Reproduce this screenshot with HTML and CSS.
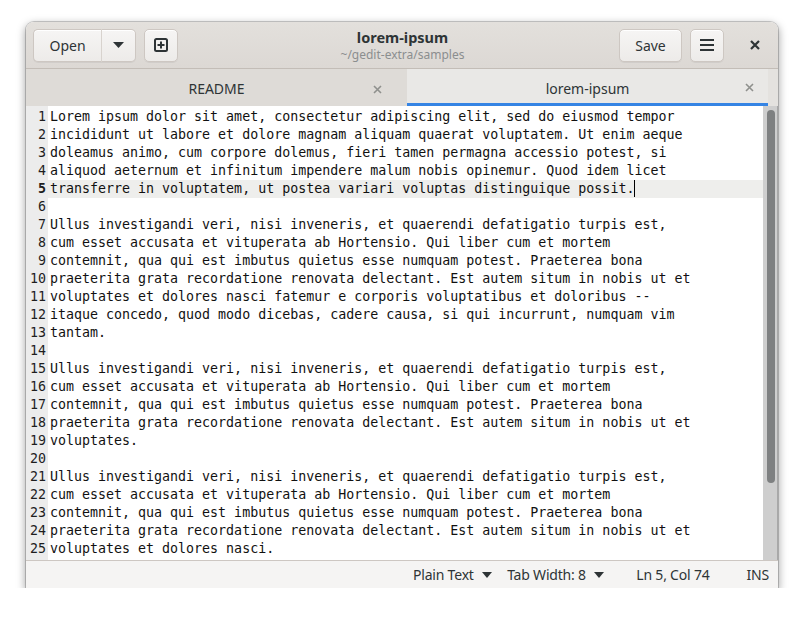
FILE: index.html
```html
<!DOCTYPE html>
<html>
<head>
<meta charset="utf-8">
<link rel="stylesheet" href="styles.css">
</head>
<body>
<div class="window">
  <header class="headerbar">
    <div class="hb-left">
      <div class="split">
        <button class="btn btn-open">Open</button>
        <button class="btn btn-drop"><svg width="11" height="6" viewBox="0 0 11 6"><path d="M0 0h11L5.5 6z" fill="#2e3436"/></svg></button>
      </div>
      <button class="btn btn-icon"><svg width="14" height="14" viewBox="0 0 14 14"><rect x="1" y="1" width="12" height="12" rx="1.5" fill="none" stroke="#2e3436" stroke-width="2"/><path d="M7 3.5v7M3.5 7h7" stroke="#2e3436" stroke-width="2"/></svg></button>
    </div>
    <div class="title">
      <div class="title-main">lorem-ipsum</div>
      <div class="title-sub">~/gedit-extra/samples</div>
    </div>
    <div class="hb-right">
      <button class="btn btn-save">Save</button>
      <button class="btn btn-icon"><svg width="16" height="14" viewBox="0 0 16 14"><path d="M1 2h14M1 7h14M1 12h14" stroke="#2e3436" stroke-width="2"/></svg></button>
      <button class="btn-close"><svg width="10" height="10" viewBox="0 0 10 10"><path d="M1 1l8 8M9 1l-8 8" stroke="#2e3436" stroke-width="2.2"/></svg></button>
    </div>
  </header>
  <nav class="tabbar">
    <div class="tab tab-readme"><span class="tab-label">README</span><span class="tab-x"><svg width="9" height="9" viewBox="0 0 9 9"><path d="M1 1l7 7M8 1l-7 7" stroke="#8f908d" stroke-width="1.6"/></svg></span></div>
    <div class="tab tab-active"><span class="tab-label">lorem-ipsum</span><span class="tab-x"><svg width="9" height="9" viewBox="0 0 9 9"><path d="M1 1l7 7M8 1l-7 7" stroke="#8f908d" stroke-width="1.6"/></svg></span></div>
    <div class="tab-rest"></div>
  </nav>
  <main class="editor">
    <div class="gutter">
      <div class="ln">1</div><div class="ln">2</div><div class="ln">3</div><div class="ln">4</div><div class="ln ln-cur">5</div>
      <div class="ln">6</div><div class="ln">7</div><div class="ln">8</div><div class="ln">9</div><div class="ln">10</div>
      <div class="ln">11</div><div class="ln">12</div><div class="ln">13</div><div class="ln">14</div><div class="ln">15</div>
      <div class="ln">16</div><div class="ln">17</div><div class="ln">18</div><div class="ln">19</div><div class="ln">20</div>
      <div class="ln">21</div><div class="ln">22</div><div class="ln">23</div><div class="ln">24</div><div class="ln">25</div>
    </div>
    <div class="text">
      <div class="line">Lorem ipsum dolor sit amet, consectetur adipiscing elit, sed do eiusmod tempor</div>
      <div class="line">incididunt ut labore et dolore magnam aliquam quaerat voluptatem. Ut enim aeque</div>
      <div class="line">doleamus animo, cum corpore dolemus, fieri tamen permagna accessio potest, si</div>
      <div class="line">aliquod aeternum et infinitum impendere malum nobis opinemur. Quod idem licet</div>
      <div class="line line-cur">transferre in voluptatem, ut postea variari voluptas distinguique possit.<span class="cursor"></span></div>
      <div class="line"></div>
      <div class="line">Ullus investigandi veri, nisi inveneris, et quaerendi defatigatio turpis est,</div>
      <div class="line">cum esset accusata et vituperata ab Hortensio. Qui liber cum et mortem</div>
      <div class="line">contemnit, qua qui est imbutus quietus esse numquam potest. Praeterea bona</div>
      <div class="line">praeterita grata recordatione renovata delectant. Est autem situm in nobis ut et</div>
      <div class="line">voluptates et dolores nasci fatemur e corporis voluptatibus et doloribus --</div>
      <div class="line">itaque concedo, quod modo dicebas, cadere causa, si qui incurrunt, numquam vim</div>
      <div class="line">tantam.</div>
      <div class="line"></div>
      <div class="line">Ullus investigandi veri, nisi inveneris, et quaerendi defatigatio turpis est,</div>
      <div class="line">cum esset accusata et vituperata ab Hortensio. Qui liber cum et mortem</div>
      <div class="line">contemnit, qua qui est imbutus quietus esse numquam potest. Praeterea bona</div>
      <div class="line">praeterita grata recordatione renovata delectant. Est autem situm in nobis ut et</div>
      <div class="line">voluptates.</div>
      <div class="line"></div>
      <div class="line">Ullus investigandi veri, nisi inveneris, et quaerendi defatigatio turpis est,</div>
      <div class="line">cum esset accusata et vituperata ab Hortensio. Qui liber cum et mortem</div>
      <div class="line">contemnit, qua qui est imbutus quietus esse numquam potest. Praeterea bona</div>
      <div class="line">praeterita grata recordatione renovata delectant. Est autem situm in nobis ut et</div>
      <div class="line">voluptates et dolores nasci.</div>
    </div>
    <div class="scrollbar"><div class="slider"></div></div>
  </main>
  <footer class="statusbar">
    <span class="st st-lang">Plain Text <svg width="10" height="6" viewBox="0 0 10 6"><path d="M0 0h10L5 6z" fill="#2e3436"/></svg></span>
    <span class="st st-tab">Tab Width: 8 <svg width="10" height="6" viewBox="0 0 10 6"><path d="M0 0h10L5 6z" fill="#2e3436"/></svg></span>
    <span class="st st-pos">Ln 5, Col 74</span>
    <span class="st st-ins">INS</span>
  </footer>
</div>
</body>
</html>
```

FILE: styles.css
```css
* { box-sizing: border-box; }
html, body { margin: 0; padding: 0; background: #ffffff; }
body { padding: 22px 26px 0 26px; font-family: "Noto Sans", "Open Sans", sans-serif; color: #2e3436; }

.window {
  width: 752px;
  height: 566px;
  display: flex;
  flex-direction: column;
  border-radius: 8px 8px 0 0;
  box-shadow: 0 0 0 1px rgba(0,0,0,0.18), 0 3px 9px 1px rgba(0,0,0,0.35);
  overflow: hidden;
  background: #ffffff;
}

.headerbar {
  height: 47px;
  flex: none;
  display: grid;
  grid-template-columns: 1fr auto 1fr;
  align-items: center;
  padding: 0 6px 0 7px;
  background: linear-gradient(#e3e0dc, #dcd8d4);
  border-bottom: 1px solid #c3bdb7;
}
.hb-left { display: flex; gap: 8px; align-items: center; }
.hb-right { display: flex; gap: 8px; align-items: center; justify-content: flex-end; }

.btn {
  height: 33px;
  border: 1px solid #cdc7c2;
  border-radius: 5px;
  background: linear-gradient(#f6f5f4, #edebe9);
  box-shadow: inset 0 1px #ffffff, 0 1px rgba(0,0,0,0.05);
  font-family: "Noto Sans", "Open Sans", sans-serif;
  font-size: 14px;
  color: #2e3436;
  display: flex;
  align-items: center;
  justify-content: center;
  padding: 0;
}
.split { display: flex; }
.btn-open { width: 68px; border-radius: 5px 0 0 5px; border-right: none; }
.btn-drop { width: 35px; border-radius: 0 5px 5px 0; border-left: 1px solid #d8d3ce; }
.btn-icon { width: 34px; }
.btn-save { width: 63px; }
.btn-close {
  width: 34px; height: 33px; border: none; background: transparent;
  display: flex; align-items: center; justify-content: center; padding: 0;
  margin-left: 6px;
}

.title { text-align: center; line-height: 1; }
.title-main { font-weight: 700; font-size: 14.5px; color: #2e3436; margin-top: 1px; }
.title-sub { font-size: 12px; color: #8b8e8f; margin-top: 5px; }

.tabbar {
  height: 37px;
  flex: none;
  display: flex;
  background: #dedbd7;
}
.tab {
  position: relative;
  display: flex;
  align-items: center;
  justify-content: center;
  font-size: 14px;
  color: #2e3436;
  padding-top: 1px;
}
.tab-readme { width: 381px; }
.tab-active { width: 361px; background: #e9e8e6; border-bottom: 3px solid #3584e4; padding-top: 4px; }
.tab-rest { flex: 1; background: #e4e2df; }
.tab-x {
  position: absolute;
  right: 23px;
  top: 50%;
  margin-top: -4px;
  display: flex;
}
.tab-readme .tab-x { right: 25px; margin-top: -3px; }
.tab-active .tab-x { right: 14px; margin-top: -3px; }

.editor {
  flex: 1;
  display: flex;
  min-height: 0;
  background: #ffffff;
  font-family: "DejaVu Sans Mono", "Liberation Mono", monospace;
  font-size: 13.3px;
  color: #111111;
}
.gutter {
  width: 22px;
  flex: none;
  background: #ececec;
  padding: 2px 2px 0 0;
  text-align: right;
}
.ln { height: 18px; line-height: 18px; color: #1e1e1e; }
.ln-cur { font-weight: 700; }
.text { flex: 1; padding-top: 2px; }
.line { height: 18px; line-height: 18px; padding-left: 2px; white-space: pre; }
.line-cur { background: #eeeeec; }
.cursor {
  display: inline-block;
  width: 1px;
  height: 17px;
  background: #000;
  vertical-align: -4px;
}
.scrollbar {
  width: 15px;
  flex: none;
  background: #cecece;
  padding: 4px 3px 0 4px;
  border-right: 1px solid #a8a8a8;
}
.slider {
  width: 8px;
  height: 373px;
  border-radius: 4px;
  background: #7e8081;
}

.statusbar {
  height: 28px;
  flex: none;
  display: flex;
  align-items: center;
  justify-content: flex-end;
  padding: 0 9px 0 0;
  background: #f5f4f3;
  border-top: 1px solid #cdc7c2;
  font-size: 14px;
  color: #2e3436;
  letter-spacing: -0.2px;
}
.st { display: flex; align-items: center; gap: 5px; white-space: pre; }
.st-tab { margin-left: 15px; }
.st-pos { margin-left: 32px; }
.st-ins { margin-left: 37px; }
```
